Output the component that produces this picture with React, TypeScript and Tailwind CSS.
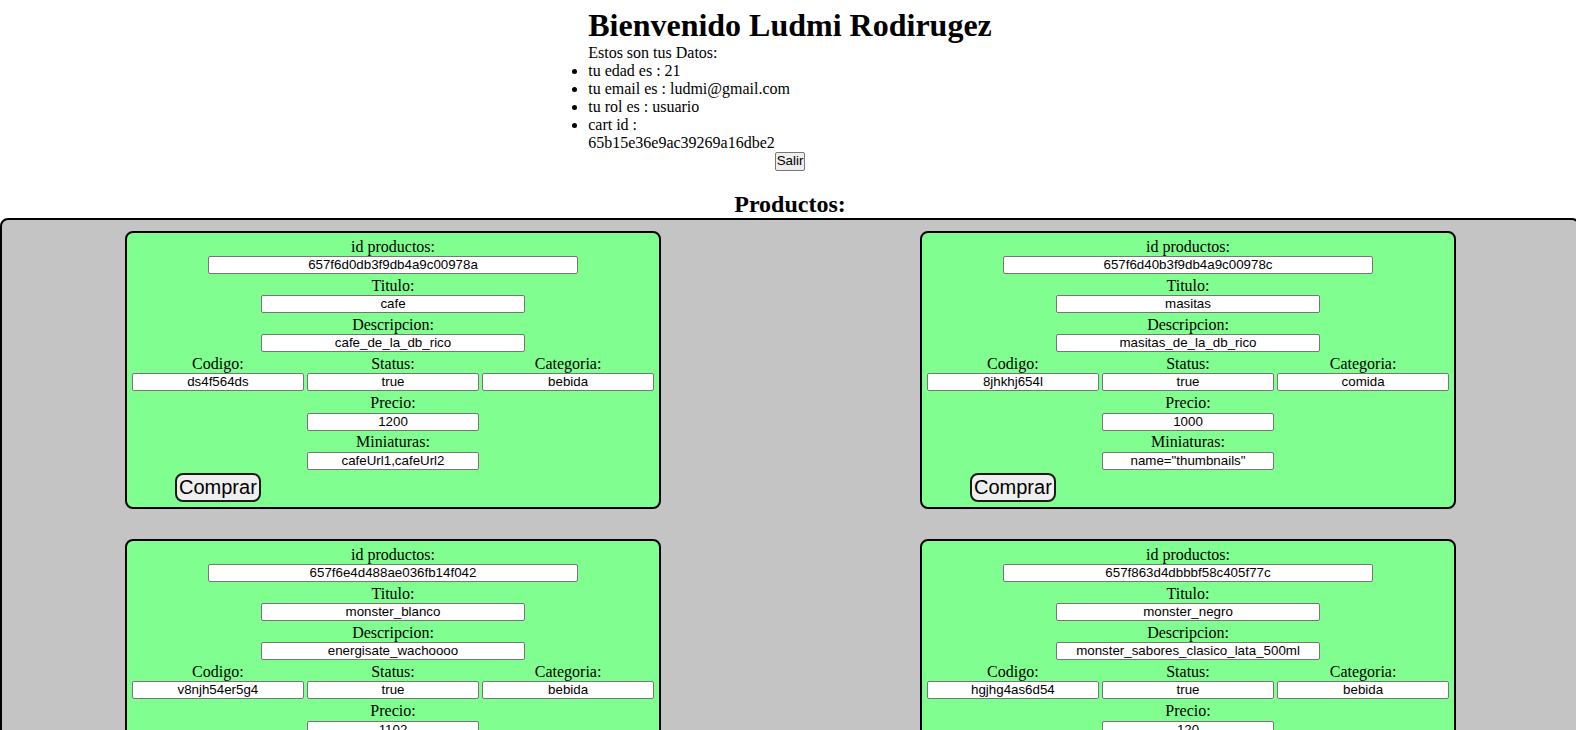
import React from "react";

type Product = {
  id: string;
  title: string;
  desc: string;
  code: string;
  status: string;
  cat: string;
  price: string;
  thumbs: string;
};

const products: Product[] = [
  {
    id: "657f6d0db3f9db4a9c00978a",
    title: "cafe",
    desc: "cafe_de_la_db_rico",
    code: "ds4f564ds",
    status: "true",
    cat: "bebida",
    price: "1200",
    thumbs: "cafeUrl1,cafeUrl2",
  },
  {
    id: "657f6d40b3f9db4a9c00978c",
    title: "masitas",
    desc: "masitas_de_la_db_rico",
    code: "8jhkhj654l",
    status: "true",
    cat: "comida",
    price: "1000",
    thumbs: 'name="thumbnails"',
  },
  {
    id: "657f6e4d488ae036fb14f042",
    title: "monster_blanco",
    desc: "energisate_wachoooo",
    code: "v8njh54er5g4",
    status: "true",
    cat: "bebida",
    price: "1102",
    thumbs: "monsterUrl1",
  },
  {
    id: "657f863d4dbbbf58c405f77c",
    title: "monster_negro",
    desc: "monster_sabores_clasico_lata_500ml",
    code: "hgjhg4as6d54",
    status: "true",
    cat: "bebida",
    price: "120",
    thumbs: "monsterUrl2",
  },
];

const inputCls =
  "block mt-[0.5px] h-[18px] px-0 py-0 bg-white border border-[#767676] rounded-[2px] text-center text-black text-[13.33px] font-['Liberation_Sans',Arial,sans-serif] outline-none";

function Label({ children }: { children: React.ReactNode }) {
  return <div className="h-[18px] leading-[18px] text-center">{children}</div>;
}

function Field({ label, value, width }: { label: string; value: string; width: string }) {
  return (
    <div>
      <Label>{label}</Label>
      <div className="h-[21px] flex justify-center">
        <input readOnly value={value} className={`${inputCls} ${width}`} />
      </div>
    </div>
  );
}

function Card({ p }: { p: Product }) {
  return (
    <div className="w-[536px] border-2 border-black rounded-[8px] bg-[#80ff90] p-[5px]">
      <Field label="id productos:" value={p.id} width="w-[370px]" />
      <Field label="Titulo:" value={p.title} width="w-[264px]" />
      <Field label="Descripcion:" value={p.desc} width="w-[264px]" />
      <div className="grid grid-cols-3 gap-x-[3.3px]">
        {[
          ["Codigo:", p.code],
          ["Status:", p.status],
          ["Categoria:", p.cat],
        ].map(([l, v]) => (
          <div key={l}>
            <Label>{l}</Label>
            <div className="h-[21px]">
              <input readOnly value={v} className={`${inputCls} w-full`} />
            </div>
          </div>
        ))}
      </div>
      <Field label="Precio:" value={p.price} width="w-[172px]" />
      <Field label="Miniaturas:" value={p.thumbs} width="w-[172px]" />
      <div className="grid grid-cols-3 gap-x-[3.3px]">
        <div className="flex justify-center">
          <button className="mt-[0.7px] h-[29.3px] px-[2px] py-0 border-2 border-[#1a1a1a] rounded-[8px] bg-[#efefef] text-black text-[20px] leading-[23px] font-['Liberation_Sans',Arial,sans-serif]">
            Comprar
          </button>
        </div>
      </div>
    </div>
  );
}

export default function App() {
  return (
    <div className="w-full overflow-hidden bg-white">
      <div className="w-[1580px] pt-[7px] text-black text-[16px] font-['Liberation_Serif','Times_New_Roman',serif]">
        <div className="mx-auto w-fit">
          <h1 className="m-0 text-[32px] font-bold leading-[37px] whitespace-nowrap">
            Bienvenido Ludmi Rodirugez
          </h1>
          <p className="m-0 leading-[18px]">Estos son tus Datos:</p>
          <ul className="m-0 pl-0 list-disc list-outside leading-[18px]">
            <li>tu edad es : 21</li>
            <li>tu email es : ludmi@gmail.com</li>
            <li>tu rol es : usuario</li>
            <li>
              cart id :
              <br />
              65b15e36e9ac39269a16dbe2
            </li>
          </ul>
          <button className="mx-auto block mt-[0.4px] px-[1px] py-[1px] border border-[#767676] rounded-[2px] bg-[#efefef] text-black text-[13.33px] leading-[14.5px] font-['Liberation_Sans',Arial,sans-serif]">
            Salir
          </button>
        </div>
        <h2 className="mt-[19.9px] mb-0 text-center text-[24px] font-bold leading-[27.6px]">
          Productos:
        </h2>
        <div className="w-[1580px] border-2 border-black rounded-[8px] bg-[#c4c4c4] pt-[10.5px] pb-[20px] pl-[123px]">
          <div className="grid grid-cols-[536px_536px] gap-x-[259px] gap-y-[29.5px]">
            {products.map((p) => (
              <Card key={p.id} p={p} />
            ))}
          </div>
        </div>
      </div>
    </div>
  );
}
